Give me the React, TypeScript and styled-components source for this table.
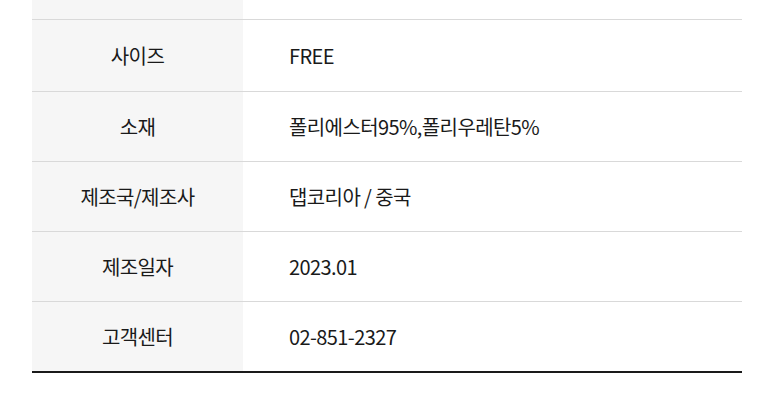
import React from "react";
import styled, { createGlobalStyle } from "styled-components";

const rows = [
  { label: "사이즈", value: "FREE", height: 72 },
  { label: "소재", value: "폴리에스터95%,폴리우레탄5%", height: 70 },
  { label: "제조국/제조사", value: "댑코리아 / 중국", height: 70 },
  { label: "제조일자", value: "2023.01", height: 70 },
  { label: "고객센터", value: "02-851-2327", height: 70 },
];

const GlobalStyle = createGlobalStyle`
  body {
    margin: 0;
    background: #fff;
    font-family: "Noto Sans CJK KR", "Noto Sans", sans-serif;
    color: #1a1a1a;
  }
`;

export default function App() {
  return (
    <>
      <GlobalStyle />
      <Page>
        <Table>
          <Row $height={19} $first>
            <Label />
            <Value />
          </Row>
          {rows.map((row, index) => (
            <Row key={index} $height={row.height}>
              <Label>{row.label}</Label>
              <Value>{row.value}</Value>
            </Row>
          ))}
        </Table>
      </Page>
    </>
  );
}

const Page = styled.div`
  width: 780px;
  height: 415px;
  padding: 0 38px 0 32px;
  box-sizing: border-box;
  overflow: hidden;
`;

const Table = styled.div`
  display: flex;
  flex-direction: column;
  border-bottom: 2px solid #1a1a1a;
`;

const Row = styled.div<{ $height: number; $first?: boolean }>`
  display: grid;
  grid-template-columns: 211px 1fr;
  height: ${(p) => p.$height}px;
  box-sizing: border-box;
  border-top: ${(p) => (p.$first ? "none" : "1px solid #d9d9d9")};
`;

const Label = styled.div`
  display: flex;
  align-items: center;
  justify-content: center;
  background-color: #f6f6f6;
  font-size: 20px;
  letter-spacing: -0.6px;
  color: #1a1a1a;
`;

const Value = styled.div`
  display: flex;
  align-items: center;
  padding-left: 46px;
  font-size: 20px;
  letter-spacing: -0.6px;
  color: #1a1a1a;
`;
